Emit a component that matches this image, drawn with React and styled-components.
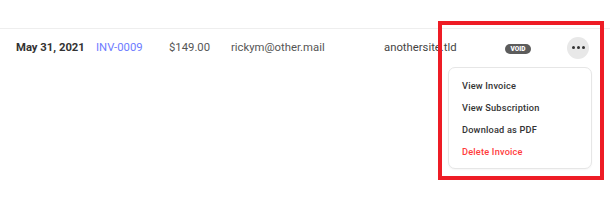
import React from "react";
import styled, { createGlobalStyle } from "styled-components";

const GlobalStyle = createGlobalStyle`
  body {
    margin: 0;
    background: #ffffff;
    font-family: Roboto, "Liberation Sans", sans-serif;
  }
`;

const Page = styled.div`
  position: relative;
  width: 610px;
  height: 206px;
  padding-top: 28px;
  box-sizing: border-box;
  overflow: hidden;
`;

const Row = styled.div`
  display: flex;
  align-items: center;
  height: 38px;
  padding-left: 16px;
  border-top: 1px solid #eeeeee;
  box-sizing: border-box;
  font-size: 11.3px;
`;

const Cell = styled.div`
  width: ${(p) => p.width}px;
  flex-shrink: 0;
  color: ${(p) => p.color || "#555555"};
  font-weight: ${(p) => (p.bold ? 700 : 400)};
  white-space: nowrap;
`;

const Badge = styled.span`
  display: inline-flex;
  align-items: center;
  justify-content: center;
  width: 26px;
  height: 10px;
  border-radius: 5px;
  background: #5c5c5c;
  color: #ffffff;
  font-size: 6.5px;
  font-weight: 900;
`;

const MoreButton = styled.button`
  display: flex;
  align-items: center;
  justify-content: center;
  gap: 2px;
  width: 22px;
  height: 22px;
  padding: 0;
  border: none;
  border-radius: 50%;
  background: #e8e8e8;
`;

const Dot = styled.span`
  width: 3px;
  height: 3px;
  border-radius: 50%;
  background: #333333;
`;

const Menu = styled.div`
  position: absolute;
  top: 67px;
  left: 448px;
  width: 144px;
  padding: 7px 0 5px;
  box-sizing: border-box;
  border: 1px solid #e6e6e6;
  border-radius: 7px;
  background: #ffffff;
  box-shadow: 0 1px 2px rgba(0, 0, 0, 0.04);
`;

const MenuItem = styled.div`
  height: 22px;
  line-height: 22px;
  padding-left: 13px;
  font-size: 9.2px;
  font-weight: 500;
  letter-spacing: 0.2px;
  color: ${(p) => (p.danger ? "#ff3b3b" : "#333333")};
`;

const Highlight = styled.div`
  position: absolute;
  top: 21px;
  left: 438px;
  width: 166px;
  height: 159px;
  box-sizing: border-box;
  border: 4px solid #ee1c25;
  pointer-events: none;
`;

const menuItems = ["View Invoice", "View Subscription", "Download as PDF"];

export default function App() {
  return (
    <>
      <GlobalStyle />
      <Page>
        <Row>
          <Cell width={80} bold color="#333333">
            May 31, 2021
          </Cell>
          <Cell width={73} color="#6d7bff">
            INV-0009
          </Cell>
          <Cell width={62}>$149.00</Cell>
          <Cell width={153}>rickym@other.mail</Cell>
          <Cell width={121} color="#444444">
            anothersite.tld
          </Cell>
          <Cell width={62}>
            <Badge>VOID</Badge>
          </Cell>
          <MoreButton>
            <Dot />
            <Dot />
            <Dot />
          </MoreButton>
        </Row>
        <Menu>
          {menuItems.map((item) => (
            <MenuItem key={item}>{item}</MenuItem>
          ))}
          <MenuItem danger>Delete Invoice</MenuItem>
        </Menu>
        <Highlight />
      </Page>
    </>
  );
}
